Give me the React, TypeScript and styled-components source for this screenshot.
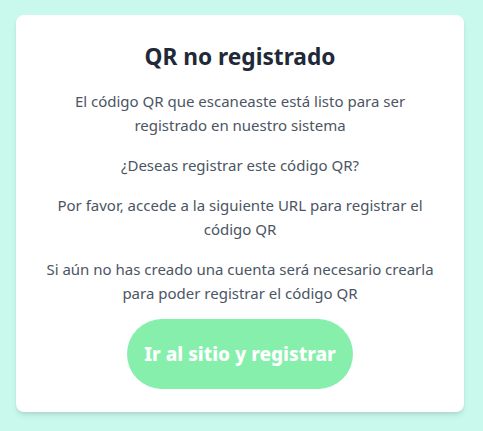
import React from "react";
import styled, { createGlobalStyle } from "styled-components";

const GlobalStyle = createGlobalStyle`
  html, body {
    margin: 0;
    padding: 0;
    background: #c9f9ed;
  }
  body {
    font-family: "Noto Sans", "Open Sans", sans-serif;
  }
  * { box-sizing: border-box; }
`;

const Page = styled.div`
  min-height: 431px;
  padding: 15px 19px 16px 16px;
  background: #c9f9ed;
`;

const Card = styled.div`
  width: 448px;
  background: #ffffff;
  border-radius: 8px;
  box-shadow: 0 4px 6px -1px rgba(0, 0, 0, 0.1), 0 2px 4px -2px rgba(0, 0, 0, 0.1);
  padding: 26px 24px 23px;
  display: flex;
  flex-direction: column;
  align-items: center;
  text-align: center;
`;

const Title = styled.h1`
  margin: 0 0 16px;
  font-size: 22.7px;
  line-height: 32px;
  font-weight: 700;
  color: #1f2937;
`;

const Text = styled.p`
  margin: 0 0 16px;
  font-size: 15px;
  line-height: 24px;
  color: #4b5563;
  &:last-of-type {
    margin-bottom: 14px;
  }
`;

const Button = styled.a`
  display: inline-block;
  background: #86efac;
  color: #ffffff;
  font-weight: 800;
  font-size: 19px;
  line-height: 28px;
  padding: 21px 17px;
  border-radius: 9999px;
  text-decoration: none;
  cursor: pointer;
`;

export default function App() {
  return (
    <>
      <GlobalStyle />
      <Page>
        <Card>
          <Title>QR no registrado</Title>
          <Text>El código QR que escaneaste está listo para ser registrado en nuestro sistema</Text>
          <Text>¿Deseas registrar este código QR?</Text>
          <Text>Por favor, accede a la siguiente URL para registrar el código QR</Text>
          <Text>Si aún no has creado una cuenta será necesario crearla para poder registrar el código QR</Text>
          <Button href="#">Ir al sitio y registrar</Button>
        </Card>
      </Page>
    </>
  );
}
